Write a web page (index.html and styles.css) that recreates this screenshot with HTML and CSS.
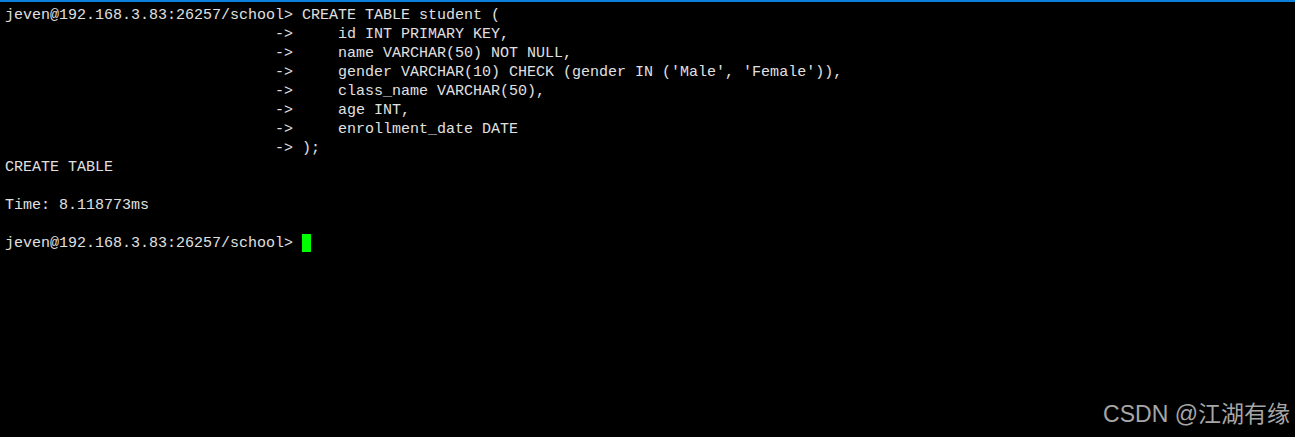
FILE: index.html
```html
<!DOCTYPE html>
<html lang="en">
<head>
<meta charset="utf-8">
<link rel="stylesheet" href="styles.css">
</head>
<body>
<div class="term">
<pre class="out">jeven@192.168.3.83:26257/school&gt; CREATE TABLE student (
                              -&gt;     id INT PRIMARY KEY,
                              -&gt;     name VARCHAR(50) NOT NULL,
                              -&gt;     gender VARCHAR(10) CHECK (gender IN ('Male', 'Female')),
                              -&gt;     class_name VARCHAR(50),
                              -&gt;     age INT,
                              -&gt;     enrollment_date DATE
                              -&gt; );
CREATE TABLE

Time: 8.118773ms

jeven@192.168.3.83:26257/school&gt; <span class="cursor"> </span></pre>
<div class="mark">CSDN @江湖有缘</div>
</div>
</body>
</html>
```
FILE: styles.css
```css
html, body {
  margin: 0;
  padding: 0;
  background: #000;
}
.term {
  position: relative;
  width: 1295px;
  height: 437px;
  box-sizing: border-box;
  border-top: 2px solid #0a80dc;
  background: #000;
  padding: 4px 0 0 5px;
  overflow: hidden;
}
.out {
  margin: 0;
  font-family: "Liberation Mono", "DejaVu Sans Mono", monospace;
  font-size: 15px;
  line-height: 19px;
  color: #e0e0e0;
  white-space: pre;
}
.cursor {
  display: inline-block;
  width: 9px;
  height: 18px;
  background: #00ff00;
  vertical-align: top;
  margin-top: 0;
}
.mark {
  position: absolute;
  right: 5px;
  bottom: 9px;
  font-family: "Liberation Sans", "Noto Sans CJK SC", sans-serif;
  font-size: 23px;
  color: #a6a6a6;
  line-height: 28px;
}
```
